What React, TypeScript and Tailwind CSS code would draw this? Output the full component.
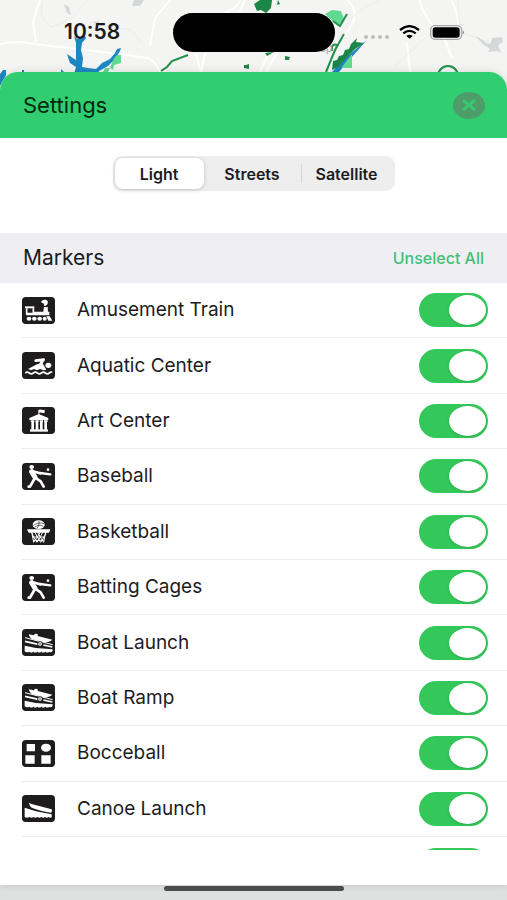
import type { ReactNode } from "react"
import { useState } from "react"

type IconName = "train" | "swim" | "museum" | "batter" | "basketball" | "ramp" | "bocce" | "canoe"

interface Marker {
  label: string
  icon: IconName
}

const MARKERS: Marker[] = [
  { label: "Amusement Train", icon: "train" },
  { label: "Aquatic Center", icon: "swim" },
  { label: "Art Center", icon: "museum" },
  { label: "Baseball", icon: "batter" },
  { label: "Basketball", icon: "basketball" },
  { label: "Batting Cages", icon: "batter" },
  { label: "Boat Launch", icon: "ramp" },
  { label: "Boat Ramp", icon: "ramp" },
  { label: "Bocceball", icon: "bocce" },
  { label: "Canoe Launch", icon: "canoe" },
]

const MAP_STYLES = ["Light", "Streets", "Satellite"]

const GLYPHS: Record<IconName, ReactNode> = {
  train: (
    <>
      <path d="M9 28h28v6H9z" />
      <path d="M14 34v16h20V34" fill="none" stroke="#fff" strokeWidth="5" />
      <path d="M36 44h28l2-14h11l1 14h4v11H12v-7h24z" />
      <path d="M60 11c6-4 15-3 17 2 2 5-1 11-5 13h-6c1-5-1-8-5-8-4-1-4-5-1-7z" />
      <g>
        <ellipse cx="21" cy="65" rx="7" ry="6" />
        <ellipse cx="37" cy="65" rx="7" ry="6" />
        <ellipse cx="53" cy="65" rx="7" ry="6" />
        <ellipse cx="68" cy="65" rx="6" ry="6" />
      </g>
      <path d="M73 58h10l8 13H79z" />
    </>
  ),
  swim: (
    <>
      <path d="M11 55l34-18 16-4 12 20-9 2-10-4-9 4-9-4-9 4-8-4z" />
      <path d="M41 26l24-3-10 14" fill="none" stroke="#fff" strokeWidth="8" strokeLinecap="round" strokeLinejoin="round" />
      <ellipse cx="79" cy="40" rx="9" ry="8" />
      <path d="M10 63q6-5 12 0t12 0 12 0 12 0 12 0 12 0 8-1" fill="none" stroke="#fff" strokeWidth="5" />
    </>
  ),
  museum: (
    <>
      <path d="M49 8h3c6-2 9 3 16 0v9c-7 3-10-2-16 0v5l27 11v6H22v-6l27-11z" />
      <path d="M26 40h11v4l-1 2v22h-8V46l-2-2zM40 40h10v4l-1 2v22h-8V46l-1-2zM53 40h10v4l-1 2v22h-8V46l-1-2zM66 40h11v4l-2 2v22h-8V46l-1-2z" />
      <path d="M24 67h54v7H24z" />
    </>
  ),
  batter: (
    <>
      <ellipse cx="29" cy="12" rx="7" ry="6" />
      <g fill="none" stroke="#fff" strokeLinecap="round" strokeLinejoin="round">
        <path d="M29 26l10 17" strokeWidth="15" />
        <path d="M30 24l24 7" strokeWidth="8" />
        <path d="M54 30l31 4" strokeWidth="7" />
        <path d="M38 46l-6 11-8 14h-4" strokeWidth="8" />
        <path d="M43 46l13 9 9 16" strokeWidth="8" />
      </g>
      <circle cx="78" cy="20" r="4" />
    </>
  ),
  basketball: (
    <>
      <ellipse cx="50" cy="20" rx="18" ry="13" />
      <path
        d="M34 22c12-8 22-8 33-5M38 28c8-7 18-8 26-3M50 9c3 6 0 14-5 22"
        fill="none"
        stroke="#1f1c1d"
        strokeWidth="2"
      />
      <path d="M15 34h70l-4 10H20z" />
      <path
        d="M29 42l6 31 11-16 10 16 10-16 7-14M71 42l-6 31-10-16-10 16-10-16-6-14M38 42l8 15 9-15M62 42l-7 15-9-15M33 57h34M35 67h30"
        fill="none"
        stroke="#fff"
        strokeWidth="3"
      />
    </>
  ),
  ramp: (
    <>
      <path d="M20 16l16 3 3-5 8 1v6l44 11c-7 6-17 9-28 8L30 30c-5-2-8-8-10-14z" />
      <path d="M9 26l83 21" stroke="#fff" strokeWidth="3" />
      <path d="M9 37l40 9M64 48l27 6" stroke="#fff" strokeWidth="5" />
      <circle cx="54" cy="45" r="7" stroke="#1f1c1d" strokeWidth="3" />
      <circle cx="54" cy="45" r="2" fill="#1f1c1d" />
      <path d="M8 50l34 7 50 4v5q-5 6-10 2-6 5-12 0-6 5-12 0-6 5-12 0-6 5-12 0-6 5-12 0-8 4-14-1z" />
    </>
  ),
  bocce: (
    <>
      <path d="M14 12h25v22H14zM10 46h28v25H10zM58 46h28v25H58z" />
      <ellipse cx="72" cy="23" rx="15" ry="12" />
    </>
  ),
  canoe: (
    <>
      <path d="M21 23c5 3 10 5 16 6l52 14c2 4 1 8-2 10-18-1-36-7-54-13-7-3-11-9-12-17z" />
      <path d="M8 38l34 11 47 9v8q-4 4-9 0-5 4-11 0-5 4-11 0-6 4-12 0-6 4-12 0-6 4-12 0-7 4-14 0z" />
    </>
  ),
}

function MarkerIcon({ name }: { name: IconName }) {
  return (
    <svg viewBox="0 0 99 81" className="h-[27px] w-[33px] shrink-0" aria-hidden="true">
      <rect width="99" height="81" rx="11" fill="#1f1c1d" />
      <g fill="#fff">{GLYPHS[name]}</g>
    </svg>
  )
}

function MapBackdrop() {
  return (
    <svg
      viewBox="0 0 507 100"
      preserveAspectRatio="xMidYMin slice"
      className="absolute inset-x-0 top-0 h-[100px] w-full"
      aria-hidden="true"
    >
      <rect width="507" height="100" fill="#f4f4f3" />
      <g fill="none" stroke="#fff" strokeWidth="2">
        <path d="M0 44q16-4 34 0l60 7 55 7q8 6 12 16M36 42l-3-20 7-22M170 0l-15 18-5 28M196 54l5 18M205 53l-4 20M260 72l11-24M266 72l15-26M347 0q20 16-12 45M240 0q-2 8-15 13M407 43l3 30M420 0q1 14 24 38l8 20M451 0q8 12 7 28M245 0l-6 14" />
      </g>
      <g fill="none" stroke="#ececec" strokeWidth="1">
        <path d="M42 3q-4 16 10 24l20-9 16-18M98 24l33 6 12 14M379 0q-30 12-42 42M458 0l2 32 34 12M425 38l-30 28" />
      </g>
      <g fill="#d4d8d9">
        <path d="M64 4l5 3 2 8-4-2zM134 0h10l-4 6h-8zM92 22l8-1-3 3z" />
        <path d="M475 36l6 3 7 5 3-1 1-5 10-1 1 5-5 3 2 5 2 3-5-2-9 1 2-3-6-4z" />
      </g>
      <g fill="#1d87c2">
        <path d="M74 36l3 3h4l4-3 1 2-4 5-1 7 2 8-1 9 6 1 8 1 6-6 8-4 5-6 2-4 4-1-1 3-5 8-7 7-9 5-1 3H74l2-7-6-4-3-9 9 6V43z" />
        <path d="M0 74l3-4h3v5l-4 10H0z" />
        <path d="M22 70h2v4h-2zM61 69l3 3h-3z" />
        <path d="M332 72l10-11 21-18 3-2-15 17-12 14z" />
      </g>
      <g fill="#62d990">
        <path d="M114 58l3-3h4v8l-7 2-1 5-3-2-2 4h-5l2-4h5z" />
        <path d="M342 67l10-13v14h-10z" />
        <path d="M325 14l7-4 9 1 3 8-6 7z" />
      </g>
      <g fill="none" stroke="#22914b" strokeWidth="2">
        <path d="M161 71l6-4 5-6 16-6M326 72l9-22 9-16M332 51q-1-8 5-6l-2 6M333 21l7 5 7-12" />
        <circle cx="448" cy="76" r="10" />
      </g>
      <g fill="#1c8548">
        <path d="M254 4l6-4h12l-1 8-5 5-5-3-4 1zM278 0l2 4-3 1zM244 65h2l3-1v5l-5-1zM265 53l9-1-7 4zM285 56l5 1-1 3h-4z" />
        <path d="M332 70l1-9 4-1 2-4 4-1 2-5 4-1 2-5 6-6-1 4 8 1-9 6-17 18z" />
      </g>
      <text x="320" y="52" fontSize="11" fontFamily="Inter, sans-serif" fill="#a8a8a8">
        sp
      </text>
    </svg>
  )
}

function StatusBar() {
  return (
    <div className="relative flex h-[72px] items-start pl-16 pr-[42px] pt-[13px]">
      <time className="w-[109px] text-[21px] leading-[38px] font-semibold">10:58</time>
      <div className="h-[39px] w-[162px] rounded-full bg-black" />
      <div className="ml-auto flex h-[38px] items-center">
        <div className="mr-[10px] flex gap-[3px] pt-[9px]">
          {[0, 1, 2, 3].map((dot) => (
            <span key={dot} className="size-1 rounded-full bg-[#bdbdbd]" />
          ))}
        </div>
        <svg viewBox="0 0 63 42" className="mr-[10px] h-[14px] w-[21px]" aria-label="Wi-Fi">
          <g fill="none" stroke="#000" strokeWidth="7">
            <path d="M3 15Q31-8 60 15" />
            <path d="M13 25q18-15 37 0" />
          </g>
          <path d="M22 33q9-7 19 0l-9 8z" />
        </svg>
        <svg viewBox="0 0 105 45" className="h-[15px] w-[35px]" aria-label="Battery">
          <rect x="2" y="2" width="93" height="41" rx="13" fill="none" stroke="#a6a6a6" strokeWidth="4" />
          <rect x="8" y="7" width="81" height="31" rx="8" />
          <path d="M99 17q6 5 0 11z" fill="#777" />
        </svg>
      </div>
    </div>
  )
}

interface ToggleProps {
  checked: boolean
  onChange: () => void
  label?: string
}

function Toggle({ checked, onChange, label }: ToggleProps) {
  return (
    <input
      type="checkbox"
      role="switch"
      aria-label={label}
      checked={checked}
      onChange={onChange}
      className="relative h-[34px] w-[69px] shrink-0 appearance-none rounded-full bg-[#e9e9eb] before:absolute before:top-[2px] before:left-[2px] before:h-[30px] before:w-[37px] before:rounded-[50%] before:bg-white before:shadow-[0_1px_3px_rgba(0,0,0,0.12)] checked:bg-[#34c759] checked:before:left-[30px]"
    />
  )
}

export default function App() {
  const [mapStyle, setMapStyle] = useState("Light")
  const [selected, setSelected] = useState<string[]>(MARKERS.map((m) => m.label))
  const [showOther, setShowOther] = useState(true)

  const toggle = (label: string) => {
    setSelected((prev) => (prev.includes(label) ? prev.filter((l) => l !== label) : [...prev, label]))
  }

  const unselectAll = () => {
    setSelected([])
    setShowOther(false)
  }

  return (
    <div className="relative flex h-screen flex-col overflow-hidden bg-[#dfe1e0] font-[Inter,sans-serif] text-[#1c1c1e]">
      <MapBackdrop />
      <StatusBar />

      <main className="relative flex min-h-0 flex-1 flex-col overflow-hidden rounded-t-[18px] bg-white shadow-[0_0_8px_rgba(0,0,0,0.12)]">
        <header className="flex h-[66px] shrink-0 items-center justify-between bg-[#30ce71] pr-[22px] pl-[23px]">
          <h1 className="text-[22px] leading-7 text-[#06280f]">Settings</h1>
          <button
            type="button"
            aria-label="Close"
            className="flex h-[27px] w-8 items-center justify-center rounded-[50%] bg-[#4f9c6b]"
          >
            <svg viewBox="0 0 14 12" className="h-3 w-[14px]" fill="none" stroke="#36c972" strokeWidth="3">
              <path d="M1 1l12 10M13 1L1 11" />
            </svg>
          </button>
        </header>

        <div className="flex h-[95px] shrink-0 items-start justify-center pt-[18px]">
          <div className="grid h-[35px] w-[282px] grid-cols-[89px_1fr_92px] rounded-[9px] bg-[#eeeeef] p-[2px]">
            {MAP_STYLES.map((style) => (
              <button
                key={style}
                type="button"
                aria-pressed={style === mapStyle}
                onClick={() => setMapStyle(style)}
                className={`relative rounded-[8px] text-[16px] leading-5 font-semibold ${
                  style === mapStyle ? "bg-white shadow-[0_1px_4px_rgba(0,0,0,0.18)]" : ""
                } ${style === "Satellite" ? "before:absolute before:inset-y-[6px] before:left-0 before:w-px before:bg-[#d5d5d7]" : ""}`}
              >
                {style}
              </button>
            ))}
          </div>
        </div>

        <div className="flex h-[50px] shrink-0 items-center justify-between bg-[#efeef3] px-[23px]">
          <h2 className="text-[21px] leading-7">Markers</h2>
          <button type="button" onClick={unselectAll} className="text-[16px] leading-5 font-medium text-[#42bf79]">
            Unselect All
          </button>
        </div>

        <div className="mb-[35px] min-h-0 flex-1 overflow-y-auto [scrollbar-width:none]">
          <ul className="grid h-[554px] auto-rows-fr">
            {MARKERS.map((marker) => (
              <li key={marker.label} className="ml-[22px] border-b border-[#ececec]">
                <label className="flex h-full items-center pr-[19px]">
                  <MarkerIcon name={marker.icon} />
                  <span className="ml-[22px] flex-1 text-[19px] leading-6">{marker.label}</span>
                  <Toggle checked={selected.includes(marker.label)} onChange={() => toggle(marker.label)} />
                </label>
              </li>
            ))}
          </ul>
          <div className="flex h-[55px] items-center justify-end pr-[19px]">
            <Toggle label="Other markers" checked={showOther} onChange={() => setShowOther(!showOther)} />
          </div>
        </div>
      </main>

      <footer className="relative flex h-[15px] shrink-0 justify-center pt-px">
        <div className="h-[5px] w-[180px] rounded-full bg-[#4c4c4c]" />
      </footer>
    </div>
  )
}
